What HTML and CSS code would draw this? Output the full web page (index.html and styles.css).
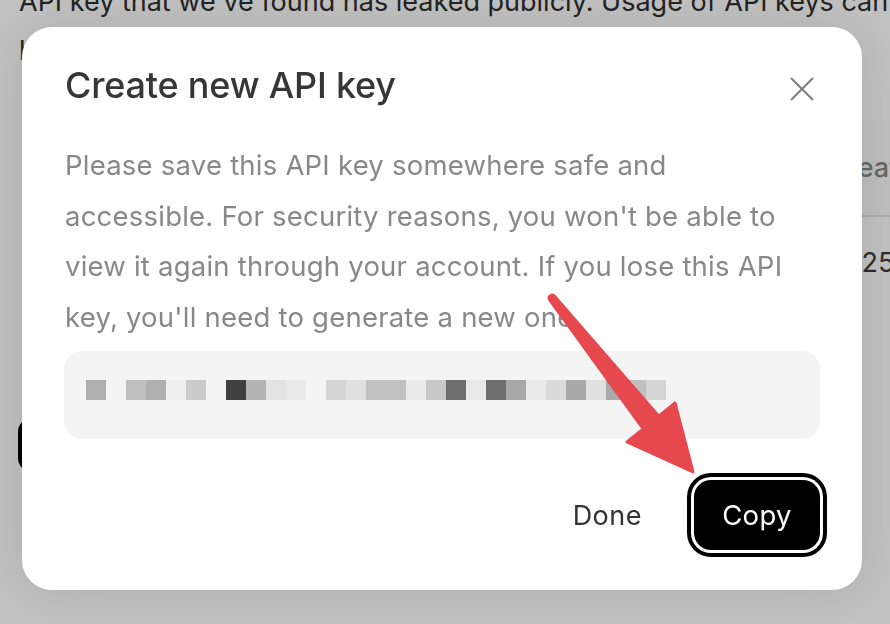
FILE: index.html
```html
<!DOCTYPE html>
<html lang="en">
<head>
    <meta charset="UTF-8">
    <meta name="viewport" content="width=device-width, initial-scale=1.0">
    <title>Create new API key</title>
    <link rel="stylesheet" href="styles.css">
</head>
<body>
    <main class="page">
        <p class="notice">API key that we've found has leaked publicly. Usage of API keys can be restricted at any time.</p>
        <div class="page-body">
            <div class="page-side">
                <button class="page-btn">Create new secret key</button>
            </div>
            <table class="keys-table">
                <thead>
                    <tr><th>Created</th></tr>
                </thead>
                <tbody>
                    <tr><td>2025-03-14</td></tr>
                </tbody>
            </table>
        </div>
    </main>

    <div class="overlay">
        <div class="modal">
            <div class="modal-head">
                <h2>Create new API key</h2>
                <button class="close-btn" aria-label="Close">
                    <svg width="24" height="24" viewBox="0 0 24 24"><path d="M1 1L23 23M23 1L1 23" stroke="#7d7d7d" stroke-width="2" fill="none"/></svg>
                </button>
            </div>
            <p class="modal-text">Please save this API key somewhere safe and accessible. For security reasons, you won't be able to view it again through your account. If you lose this API key, you'll need to generate a new one.</p>
            <div class="key-box">
                <div class="key-pixels" id="key-pixels"></div>
            </div>
            <div class="modal-actions">
                <button class="btn-done">Done</button>
                <button class="btn-copy">Copy</button>
            </div>
        </div>
    </div>

    <svg class="arrow" width="890" height="624" viewBox="0 0 890 624">
        <path d="M554.3 296.1 L658.8 416.2 L675 403 L693 472 L627 442 L643.2 428.8 L549.7 299.9 A3 3 0 0 1 554.3 296.1 Z" fill="#e5484d" stroke="#e5484d" stroke-width="3" stroke-linejoin="round"/>
    </svg>

    <script>
        // blurred key, one grey per block ('' = gap)
        const keyPixels = ['#b0b0b0', '', '#c0c0c0', '#b0b0b0', '#efefef', '#cbcbcb', '',
            '#404040', '#b4b4b4', '#e3e3e3', '#e9e9e9', '',
            '#d5d5d5', '#e0e0e0', '#c1c1c1', '#c1c1c1', '#eaeaea', '#c8c8c8', '#6e6e6e', '#e9e9e9',
            '#6e6e6e', '#a8a8a8', '#e9e9e9', '#dadada', '#a9a9a9', '#e0e0e0', '#aaaaaa', '#c0c0c0', '#d4d4d4'];

        const row = document.getElementById('key-pixels');
        keyPixels.forEach(color => {
            const block = document.createElement('span');
            block.className = 'px';
            if (color) block.style.background = color;
            row.appendChild(block);
        });
    </script>
</body>
</html>
```

FILE: styles.css
```css
body {
    margin: 0;
    font-family: Inter, 'Noto Sans', Arial, sans-serif;
    background: #fff;
    color: #333;
    overflow: hidden;
    width: 890px;
    height: 624px;
}

/* page behind the dialog */
.page {
    padding: 0 0 0 19px;
    overflow: hidden;
    height: 624px;
    box-sizing: border-box;
}
.notice {
    margin: -23px 0 0;
    font-size: 27px;
    line-height: 49px;
    color: #2e2e2e;
    width: 900px;
}
.page-body {
    display: flex;
    margin-top: 45px;
}
.page-side {
    flex: 0 0 789px;
    padding-top: 298px;
}
.page-btn {
    height: 54px;
    margin-left: -1px;
    padding: 0 24px;
    border: none;
    border-radius: 14px;
    background: #000;
    color: #fff;
    font: 500 22px Inter, sans-serif;
}
.keys-table {
    border-collapse: collapse;
    font-size: 27px;
    white-space: nowrap;
    align-self: flex-start;
}
.keys-table th {
    text-align: left;
    font-weight: 500;
    color: #8a8a8a;
    background: #fcfcfc;
    height: 95px;
    padding: 0 20px;
    border-bottom: 2px solid #e2e2e2;
}
.keys-table td {
    height: 90px;
    padding: 0 20px;
    color: #3a3a3a;
}

/* dialog */
.overlay {
    position: fixed;
    inset: 0;
    background: rgba(0, 0, 0, 0.245);
    padding: 27px 0 0 22px;
}
.modal {
    width: 840px;
    height: 563px;
    box-sizing: border-box;
    padding: 36px 42px 0 43px;
    background: #fff;
    border-radius: 30px;
    box-shadow: 0 0 50px rgba(0, 0, 0, 0.12);
}
.modal-head {
    display: flex;
    justify-content: space-between;
    align-items: center;
    height: 44px;
}
.modal-head h2 {
    margin: 0;
    font-size: 36px;
    font-weight: 500;
    color: #363636;
    letter-spacing: -0.2px;
}
.close-btn {
    border: none;
    background: none;
    padding: 0;
    margin: 8px 6px 0 0;
    width: 24px;
    height: 24px;
}
.close-btn svg {
    display: block;
}
.modal-text {
    max-width: 735px;
    margin: 33px 0 0;
    font-size: 27.5px;
    line-height: 50.5px;
    letter-spacing: 0.22px;
    color: #888;
}
.key-box {
    margin: 9px 0 0 -1px;
    height: 88px;
    box-sizing: border-box;
    padding: 29px 22px 0;
    background: #f4f4f4;
    border-radius: 18px;
}
.key-pixels {
    display: flex;
}
.px {
    width: 20px;
    height: 20px;
}
.modal-actions {
    display: flex;
    justify-content: flex-end;
    align-items: center;
    gap: 28px;
    margin-top: 34px;
}
.btn-done {
    border: none;
    background: none;
    padding: 0 24px;
    font: 400 27px Inter, sans-serif;
    letter-spacing: 0.5px;
    color: #333;
}
.btn-copy {
    width: 126px;
    height: 70px;
    margin: 7px 0;
    border: none;
    border-radius: 17px;
    background: #000;
    color: #fff;
    font: 400 27.5px Inter, sans-serif;
    letter-spacing: 0.3px;
    box-shadow: 0 0 0 3px #fff, 0 0 0 7px #000;
}

/* annotation */
.arrow {
    position: fixed;
    left: 0;
    top: 0;
    pointer-events: none;
}
```
